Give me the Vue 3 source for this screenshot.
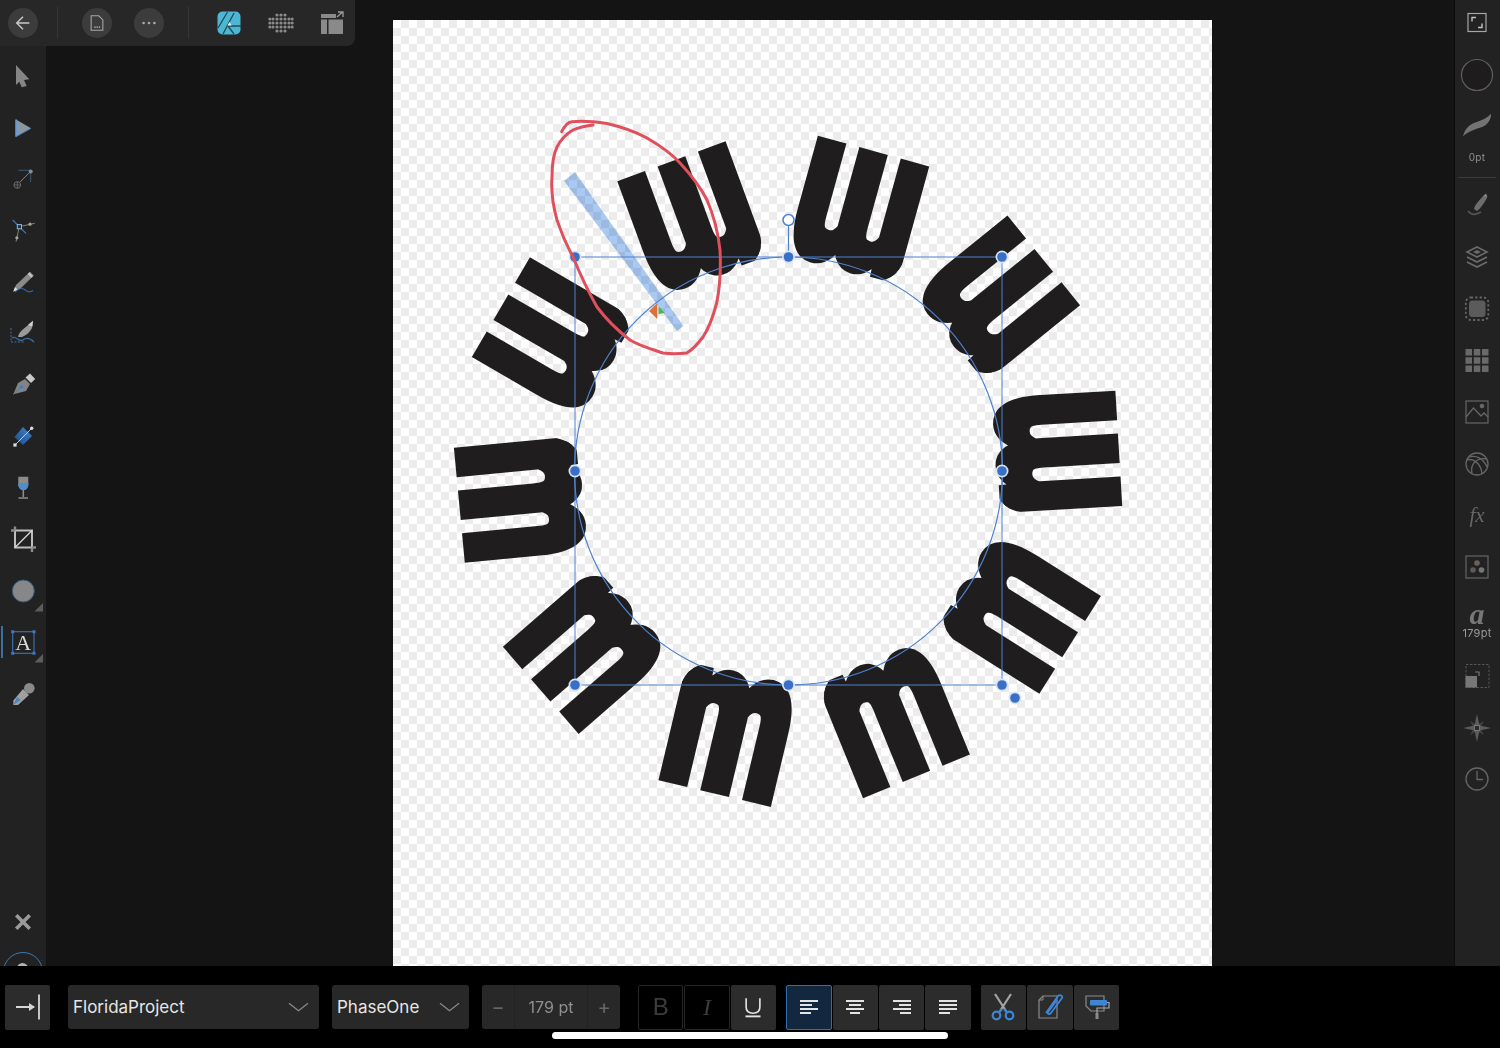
<script setup>
const cx = 788.5;
const cy = 471;
// the text on the circle: ten letters, starting at the top left, feet pointing outward
const letters = Array.from({ length: 10 }, (_, i) => {
  const angle = -20.2 + i * 35.6;
  const rad = (angle * Math.PI) / 180;
  const r = 269;
  const x = cx + r * Math.sin(rad);
  const y = cy - r * Math.cos(rad);
  return { id: i, transform: `translate(${x} ${y}) rotate(${angle - 180}) scale(0.668 1)` };
});
const handles = [
  [575, 257], [788.5, 257], [1002, 257],
  [575, 471], [1002, 471],
  [575, 685], [788.5, 685], [1002, 685],
  [1015, 698],
];
const alignRows = {
  left: [[0, 18], [0, 12], [0, 18], [0, 11]],
  center: [[0, 18], [3, 12], [0, 18], [4, 10]],
  right: [[0, 18], [6, 12], [0, 18], [7, 11]],
  justify: [[0, 18], [0, 18], [0, 18], [0, 11]],
};
</script>

<template>
  <div class="screen">
    <div class="workspace">
      <aside class="tools">
        <div class="tool">
          <svg viewBox="0 0 30 30"><path d="M8 4 21.3 18.3 16 19 18.7 25 13.7 26.3 11.3 20.7 8 24Z" fill="#858585" /></svg>
        </div>
        <div class="tool">
          <svg viewBox="0 0 30 30">
            <path d="M8 7.5 23 16.3 8 24.7Z" fill="#8b96a3" />
            <path d="M8 7.5V24.7" stroke="#5c9ae0" stroke-width="1.6" />
            <path d="M8 24.7 23 16.3" stroke="#4a7eb8" stroke-width="1" />
          </svg>
        </div>
        <div class="tool">
          <svg viewBox="0 0 30 30">
            <path d="M10.5 6.3H22.7V18" fill="none" stroke="#37587c" stroke-width="1" />
            <path d="M12 18 22.7 7.5" stroke="#999" stroke-width=".8" />
            <circle cx="22.7" cy="7.5" r="2" fill="#8c8c8c" />
            <circle cx="9.3" cy="21" r="3.3" fill="none" stroke="#777" stroke-width=".8" />
            <path d="M5.5 21H13M9.3 17.5V24.5" stroke="#777" stroke-width=".7" />
          </svg>
        </div>
        <div class="tool">
          <svg viewBox="0 0 30 30">
            <path d="M4.7 5 18 18.3" stroke="#3f78b8" stroke-width="1.2" />
            <path d="M11.3 11.7 26.7 8.3M11.3 11.7 8 26.7" stroke="#8d8d80" stroke-width=".9" />
            <rect x="9.3" y="9.6" width="4.2" height="4.2" fill="#1e3247" stroke="#8fb5dc" stroke-width="1" />
            <circle cx="22" cy="9.2" r="1.6" fill="#a5a595" />
            <circle cx="8.9" cy="22.8" r="1.6" fill="#a5a595" />
          </svg>
        </div>
        <div class="tool">
          <svg viewBox="0 0 30 30">
            <path d="M5.3 24.5 8 18 22 4.7 25.8 8.5 12 22Z" fill="#8a8a8a" />
            <path d="M20.5 6.2 24.2 10" stroke="#c2c2c2" stroke-width="2.4" />
            <path d="M5.3 24.5 7 20 10 23Z" fill="#ddd" />
            <path d="M7 25C11 21 14 20 18 23.5 20 25 23 25 25 23.5" fill="none" stroke="#3568a3" stroke-width="1.2" />
          </svg>
        </div>
        <div class="tool">
          <svg viewBox="0 0 30 30">
            <path d="M10 19C11 14 14 12 19 8L25 2.7 24 10C22 14 19 17 14 19Z" fill="#9a9a9a" />
            <path d="M20 7 25 2.7 24.4 8.5Z" fill="#d0d0d0" />
            <path d="M3 10V24M3 24H16" fill="none" stroke="#3a6ea8" stroke-width="1" stroke-dasharray="2 1.5" />
            <path d="M4 20C8 17 11 25 15 22S22 20 26 24" fill="none" stroke="#3a6ea8" stroke-width="1.2" />
          </svg>
        </div>
        <div class="tool">
          <svg viewBox="0 0 30 30">
            <path d="M5.3 24.3 10 13 17 9 22 14 18 21Z" fill="#808488" />
            <path d="M17.5 7.5 22 3.5 27.2 9 23 13Z" fill="#c9c9c9" />
            <circle cx="13.5" cy="17" r="1.8" fill="#3d7fc4" />
            <path d="M5.3 24.3 13 17" stroke="#3d7fc4" stroke-width=".9" />
          </svg>
        </div>
        <div class="tool">
          <svg viewBox="0 0 30 30">
            <defs>
              <linearGradient id="fillBlue" x1="0" y1="1" x2="1" y2="0">
                <stop offset="0" stop-color="#1e4a80" />
                <stop offset="1" stop-color="#3f86d6" />
              </linearGradient>
            </defs>
            <path d="M15 6 24 15 15 24 6.5 16Z" fill="url(#fillBlue)" />
            <path d="M7 24 23.7 7.3" stroke="#ddd" stroke-width=".9" />
            <rect x="5.4" y="22.4" width="3.2" height="3.2" fill="#ddd" />
            <circle cx="23.7" cy="7.3" r="1.7" fill="#ddd" />
          </svg>
        </div>
        <div class="tool">
          <svg viewBox="0 0 30 30">
            <path d="M10.3 3.7H20.3V11C20.3 15 18 17 15.3 17S10.3 15 10.3 11Z" fill="#8c8c8c" />
            <path d="M10.3 10H20.3V11C20.3 15 18 17 15.3 17S10.3 15 10.3 11Z" fill="#4f8cd0" />
            <path d="M15.3 17V24M10.5 25H20" stroke="#8c8c8c" stroke-width="1.6" />
          </svg>
        </div>
        <div class="tool">
          <svg viewBox="0 0 30 30">
            <path d="M7 6.5H24V23.5H7Z" fill="none" stroke="#bdbdbd" stroke-width="2" />
            <path d="M3 6.5H7M7 2.5V6.5M24 23.5H28M24 23.5V28" stroke="#8a8a8a" stroke-width="2.4" />
            <path d="M7 23.5 24 6.5" stroke="#dadada" stroke-width="1.2" />
          </svg>
        </div>
        <div class="tool">
          <svg viewBox="0 0 30 30">
            <circle cx="15.3" cy="15" r="11" fill="#878787" stroke="#36597e" stroke-width="1" />
            <path class="corner" d="M35 27V35.5H26.5Z" />
          </svg>
        </div>
        <div class="tool active">
          <span class="active-mark"></span>
          <svg viewBox="0 0 30 30">
            <rect x="4.7" y="4.7" width="21.3" height="21.6" fill="none" stroke="#3a6fae" stroke-width="1.2" />
            <path d="M3.2 3.2h3v3h-3zM24.5 3.2h3v3h-3zM3.2 24.8h3v3h-3zM24.5 24.8h3v3h-3z" fill="#3f78bc" />
            <text x="15.3" y="23" class="tool-a">A</text>
            <path class="corner" d="M35 27V35.5H26.5Z" />
          </svg>
        </div>
        <div class="tool">
          <svg viewBox="0 0 30 30">
            <circle cx="21.3" cy="9.3" r="5.3" fill="#8a8a8a" />
            <path d="M15 10 21 16 10 26 5.3 26 5.3 21.5Z" fill="#a0a0a0" />
            <path d="M5.3 26 9 18 13 21Z" fill="#4c88c8" />
          </svg>
        </div>
        <div class="tools-end">
          <svg class="close-icon" viewBox="0 0 16 16">
            <path d="M2 2 14 14M14 2 2 14" stroke="#9a9a9a" stroke-width="3.2" />
          </svg>
          <span class="help-ring"></span>
        </div>
      </aside>

      <main class="stage">
        <div class="page">
          <svg class="art" viewBox="393 20 819 946">
            <defs>
              <!-- rounds the shoulders of the letters, the feet stay square -->
              <clipPath id="letterClip">
                <rect x="-83" y="-65" width="175" height="200" rx="46" ry="32" />
              </clipPath>
            </defs>
            <text
              v-for="l in letters"
              :key="l.id"
              class="letter"
              :transform="l.transform"
              clip-path="url(#letterClip)"
              x="4.5"
              y="57.5"
            >m</text>

            <path class="guide-bar" d="M683.5 326 677 331 564 180.7 575 172.3Z" />
            <path d="M649 311 657.3 303V319Z" fill="#dd6f3c" />
            <path d="M658.5 306 664.5 313 658.5 314Z" fill="#4fb35a" />

            <rect x="575" y="257" width="427" height="428" fill="none" stroke="#4e82cf" stroke-width="1" />
            <circle cx="788.5" cy="471" r="214" fill="none" stroke="#4e82cf" stroke-width="1.2" />
            <path d="M788.5 226V257" stroke="#4e82cf" stroke-width="1.2" />
            <circle cx="788.5" cy="220" r="5.5" fill="#fff" stroke="#4e82cf" stroke-width="1.5" />
            <g v-for="h in handles" :key="h.join()">
              <circle :cx="h[0]" :cy="h[1]" r="6.5" fill="#d8e4f6" />
              <circle :cx="h[0]" :cy="h[1]" r="4.8" fill="#3a6fc7" />
            </g>

            <path
              class="scribble"
              d="M561.7 131.7C564 127 568 122 572 121.7 585 120.5 597 122 607 123.5 622 127 636 132 647 138 659 145 671 153 680 163 692 176 701 188 707 200 714 216 718 232 720 250 721 268 720 286 716.7 303 713 317 709 328 703 337 697 345 692 350 686.7 353 678 354 671 354 663 353 651 349 640 346 630 340 617 330 606 319 597 307 588 291 580 274 573 257 566 244 561 232 557 220 553 206 551 191 552 177 552 165 553 155 557 147 561 139 566 134 573 130 579 127 586 126 593 125"
            />
          </svg>
        </div>
      </main>

      <aside class="panels">
        <div class="panel-item first">
          <svg viewBox="0 0 30 30">
            <rect x="6" y="5.5" width="18" height="18" fill="none" stroke="#a6a6a6" stroke-width="1.2" />
            <path d="M10 13.5V9.5H14M20 15.5V19.5H16" fill="none" stroke="#c4c4c4" stroke-width="1.4" />
          </svg>
        </div>
        <div class="panel-item tall">
          <svg viewBox="0 0 34 34"><circle cx="17" cy="17" r="15.5" fill="#1e1c1d" stroke="#5f5f5f" stroke-width="1.2" /></svg>
        </div>
        <div class="panel-item stroke-item">
          <svg viewBox="0 0 32 30">
            <path d="M1 28C3 20 8 15 15 13 22 11 27 8 31 4 31 10 28 15 22 18 14 21 8 22 1 28Z" fill="#737373" />
          </svg>
          <span class="panel-label">0pt</span>
        </div>
        <hr class="panel-rule" />
        <div class="panel-item">
          <svg viewBox="0 0 30 30">
            <path d="M12 18C13 13 17 10 22 4 24 4 25 6 25 7 22 12 19 17 15 20Z" fill="#6d6d6d" />
            <path d="M21.5 5 24 2.5 25.5 6Z" fill="#8c8c8c" />
            <path d="M6 20C9 24 14 24 19 21" fill="none" stroke="#555" stroke-width="1.6" />
          </svg>
        </div>
        <div class="panel-item">
          <svg viewBox="0 0 30 30">
            <path d="M15 4 25 9 15 14 5 9Z" fill="none" stroke="#6b6b6b" stroke-width="1.6" />
            <path d="M11 9 15 7 19 9 15 11Z" fill="#6b6b6b" />
            <path d="M5 14 15 19 25 14M5 19 15 24 25 19" fill="none" stroke="#6b6b6b" stroke-width="1.8" />
          </svg>
        </div>
        <div class="panel-item">
          <svg viewBox="0 0 30 30">
            <rect x="7" y="6.5" width="16.5" height="16.5" rx="3.5" fill="#5b5b5b" />
            <rect x="3.8" y="3.5" width="22.5" height="22.5" rx="5" fill="none" stroke="#666" stroke-width="1.8" stroke-dasharray="2.2 2.2" />
          </svg>
        </div>
        <div class="panel-item">
          <svg viewBox="0 0 30 30" fill="#696969">
            <path d="M3.5 3h6.5v6.5h-6.5zM11.8 3h6.5v6.5h-6.5zM20 3h6.5v6.5h-6.5zM3.5 11.2h6.5v6.5h-6.5zM11.8 11.2h6.5v6.5h-6.5zM20 11.2h6.5v6.5h-6.5zM3.5 19.5h6.5v6.5h-6.5zM11.8 19.5h6.5v6.5h-6.5zM20 19.5h6.5v6.5h-6.5z" />
          </svg>
        </div>
        <div class="panel-item">
          <svg viewBox="0 0 30 30">
            <rect x="4" y="4" width="22" height="22" fill="none" stroke="#666" stroke-width="1.2" />
            <path d="M4 20 11.5 11 19 19 22 16 26 20" fill="none" stroke="#666" stroke-width="1.3" />
            <circle cx="20" cy="9" r="2.3" fill="#666" />
          </svg>
        </div>
        <div class="panel-item">
          <svg viewBox="0 0 30 30" fill="none" stroke="#666" stroke-width="1.3">
            <circle cx="15" cy="15" r="11" />
            <path d="M5 11C11 9 19 14 20 25M10 24C8 16 14 8 25 10M7 8C14 6 21 9 25 18" />
          </svg>
        </div>
        <div class="panel-item">
          <span class="fx">fx</span>
        </div>
        <div class="panel-item">
          <svg viewBox="0 0 30 30">
            <rect x="4" y="4" width="22" height="22" fill="none" stroke="#666" stroke-width="1.2" />
            <circle cx="15" cy="11" r="2.8" fill="#6e6257" />
            <circle cx="11" cy="18" r="2.8" fill="#5a5a5a" />
            <circle cx="19.5" cy="18" r="2.8" fill="#777" />
          </svg>
        </div>
        <div class="panel-item char-item">
          <span class="char-a">a</span>
          <span class="panel-label wide">179pt</span>
        </div>
        <div class="panel-item">
          <svg viewBox="0 0 30 30">
            <rect x="4" y="3.5" width="23" height="23" fill="none" stroke="#555" stroke-width="1" stroke-dasharray="2.5 1.5" />
            <rect x="3.5" y="15" width="11.5" height="11.5" fill="#777" />
            <path d="M13 11H17V15" fill="none" stroke="#777" stroke-width="1.2" />
          </svg>
        </div>
        <div class="panel-item">
          <svg viewBox="0 0 30 30">
            <path d="M8 8 15 12 22 8 18 15 22 22 15 18 8 22 12 15Z" fill="#444" />
            <path d="M15 1 17.5 12.5 29 15 17.5 17.5 15 29 12.5 17.5 1 15 12.5 12.5Z" fill="#5c5c5c" />
            <rect x="12.5" y="12.5" width="5" height="5" fill="#2b2b2b" stroke="#777" />
          </svg>
        </div>
        <div class="panel-item">
          <svg viewBox="0 0 30 30" fill="none" stroke="#666" stroke-width="1.3">
            <circle cx="15" cy="15" r="11" />
            <path d="M15 7V15.5H21" />
          </svg>
        </div>
      </aside>

      <nav class="topbar">
        <button class="round">
          <svg viewBox="0 0 20 20"><path d="M17 10H3M10 3 3 10 10 17" fill="none" stroke="#c8c8c8" stroke-width="1.6" /></svg>
        </button>
        <span class="top-rule"></span>
        <button class="round doc">
          <svg viewBox="0 0 20 20">
            <path d="M3.5 2H12L16.5 6.5V18H3.5Z" fill="none" stroke="#a8a8a8" stroke-width="1.2" />
            <path d="M7 14.5h1.5M9.5 14.5H11M12 14.5h1.5" stroke="#c0c0c0" stroke-width="1.5" />
          </svg>
        </button>
        <button class="round more">
          <svg viewBox="0 0 20 20" fill="#a8a8a8">
            <circle cx="4" cy="10" r="1.5" /><circle cx="10" cy="10" r="1.5" /><circle cx="16" cy="10" r="1.5" />
          </svg>
        </button>
        <span class="top-rule second"></span>
        <svg class="top-icon logo" viewBox="0 0 24 24">
          <rect x="0.5" y="0.5" width="23" height="23" rx="5" fill="#4db6d2" />
          <path d="M1 17 10.5 1M6 23 17 2" stroke="#1f4d5c" stroke-width="1.3" />
          <path d="M11 15H24M11 15 17 23" fill="none" stroke="#1f4d5c" stroke-width="1.3" />
          <path d="M10.5 14.5 12.5 11 14.5 14.5Z" fill="#eaf8fb" />
        </svg>
        <svg class="top-icon grid-dots" viewBox="0 0 24 24" fill="#8a8a8a">
          <g v-for="row in 5" :key="row">
            <circle
              v-for="col in 5"
              :key="col"
              v-show="!((row === 1 || row === 5) && (col === 1 || col === 5))"
              :cx="col * 4"
              :cy="row * 4"
              r="1.6"
            />
          </g>
          <circle cx="0.8" cy="8" r="1.5" /><circle cx="0.8" cy="12" r="1.5" /><circle cx="0.8" cy="16" r="1.5" />
          <circle cx="23.2" cy="8" r="1.5" /><circle cx="23.2" cy="12" r="1.5" /><circle cx="23.2" cy="16" r="1.5" />
        </svg>
        <svg class="top-icon export" viewBox="0 0 24 24" fill="#8a8a8a">
          <path d="M1 3H16V7H1ZM1 8.5H7V23H1ZM8.5 8.5H23V23H8.5Z" />
          <path d="M17 6 22.5 1M18 1H23V6" fill="none" stroke="#9c9c9c" stroke-width="1.3" />
        </svg>
      </nav>
    </div>

    <footer class="context">
      <button class="key tab-btn">
        <svg viewBox="0 0 30 30">
          <path d="M3 15H21" stroke="#d6d6d6" stroke-width="2" />
          <path d="M16 11 22 15 16 19Z" fill="#d6d6d6" />
          <path d="M26 2.5V27.5" stroke="#d6d6d6" stroke-width="1.8" />
        </svg>
      </button>
      <button class="combo font-name">
        <span>FloridaProject</span>
        <svg viewBox="0 0 22 10"><path d="M1 1 11 9 21 1" fill="none" stroke="#8c8c8c" stroke-width="1.2" /></svg>
      </button>
      <button class="combo font-style">
        <span>PhaseOne</span>
        <svg viewBox="0 0 22 10"><path d="M1 1 11 9 21 1" fill="none" stroke="#8c8c8c" stroke-width="1.2" /></svg>
      </button>
      <div class="stepper">
        <span class="step">−</span>
        <span class="step-value">179 pt</span>
        <span class="step">+</span>
      </div>
      <div class="key-row weights">
        <button class="key ghost"><span class="b">B</span></button>
        <button class="key ghost"><span class="i">I</span></button>
        <button class="key">
          <svg viewBox="0 0 24 24">
            <path d="M6.5 5V12C6.5 15.5 9 17 12 17S17.5 15.5 17.5 12V5" fill="none" stroke="#e4e4e4" stroke-width="1.3" />
            <path d="M6 19.5H18" stroke="#e4e4e4" stroke-width="1.5" />
          </svg>
        </button>
      </div>
      <div class="key-row aligns">
        <button
          v-for="(rows, name) in alignRows"
          :key="name"
          class="key"
          :class="{ selected: name === 'left' }"
        >
          <svg class="align-icon" viewBox="0 0 18 14" fill="#e4e4e4">
            <rect
              v-for="(r, i) in rows"
              :key="i"
              :x="r[0]"
              :y="i * 4"
              :width="r[1]"
              height="2"
            />
          </svg>
        </button>
      </div>
      <div class="key-row actions">
        <button class="key">
          <svg viewBox="0 0 30 30">
            <path d="M7 2 18 19M23 2 12 19" stroke="#a3a3a3" stroke-width="2.2" />
            <circle cx="8.5" cy="23.5" r="3.8" fill="none" stroke="#3d86d6" stroke-width="2.2" />
            <circle cx="21.5" cy="23.5" r="3.8" fill="none" stroke="#3d86d6" stroke-width="2.2" />
            <path d="M11 20.5 14 17M19 20.5 16 17" stroke="#3d86d6" stroke-width="2.2" />
          </svg>
        </button>
        <button class="key">
          <svg viewBox="0 0 30 30">
            <path d="M8 4H22V26H4V8Z" fill="none" stroke="#8a8a8a" stroke-width="1.2" />
            <path d="M4 8H8V4" fill="none" stroke="#8a8a8a" stroke-width="1" />
            <path d="M11 21 23 4C25 2 28 4 27 6L16 21C14 23 12 22 13 20L22 8" fill="none" stroke="#3d86d6" stroke-width="1.8" />
          </svg>
        </button>
        <button class="key">
          <svg viewBox="0 0 30 30">
            <path d="M5 4H23V19H10L5 14Z" fill="none" stroke="#8a8a8a" stroke-width="1.2" />
            <rect x="9" y="8" width="17" height="5.5" rx="1" fill="#3d86d6" />
            <path d="M26 10.5H28V16H16V22" fill="none" stroke="#aaa" stroke-width="1.2" />
            <rect x="14.5" y="21" width="3" height="6" fill="#8a8a8a" />
          </svg>
        </button>
      </div>
      <span class="home-bar"></span>
    </footer>
  </div>
</template>

<style scoped>
.screen {
  width: 1500px;
  height: 1048px;
  display: flex;
  flex-direction: column;
  background: #000;
  font-family: Inter, "Liberation Sans", sans-serif;
  overflow: hidden;
}
button {
  border: 0;
  padding: 0;
  font-family: inherit;
}
svg {
  display: block;
  overflow: visible;
}

/* work area */
.workspace {
  position: relative;
  height: 966px;
  display: flex;
  background: #141414;
}
.tools {
  width: 46px;
  flex: none;
  padding-top: 50px;
  box-sizing: border-box;
  background: #222;
  display: flex;
  flex-direction: column;
  overflow: hidden;
}
.tool {
  position: relative;
  height: 51.5px;
  flex: none;
  display: flex;
  align-items: center;
  padding-left: 8px;
}
.tool svg {
  width: 30px;
  height: 30px;
}
.corner {
  fill: #5c5c5c;
}
.active-mark {
  position: absolute;
  left: 1px;
  top: 9px;
  width: 2px;
  height: 32px;
  background: #3a6ea8;
}
.tool-a {
  font-family: "Liberation Serif", serif;
  font-size: 22px;
  fill: #d9d9d9;
  text-anchor: middle;
}
.tools-end {
  margin-top: 193px;
  display: flex;
  flex-direction: column;
  align-items: center;
}
.close-icon {
  width: 18px;
  height: 18px;
}
.help-ring {
  position: relative;
  margin-top: 21px;
  width: 40px;
  height: 40px;
  flex: none;
  box-sizing: border-box;
  border: 1.5px solid #3a7ab5;
  border-radius: 50%;
}
.help-ring::after {
  content: "";
  position: absolute;
  left: 13px;
  top: 10px;
  width: 11px;
  height: 11px;
  border-radius: 50%;
  background: #b5b5b5;
}

.stage {
  flex: 1;
  padding: 20px 0 0 347px;
  min-width: 0;
}
.page {
  width: 819px;
  height: 946px;
  background-color: #fff;
  background-image: repeating-conic-gradient(#ececec 0 25%, #fff 0 50%);
  background-size: 16px 16px;
}
.art {
  width: 819px;
  height: 946px;
  overflow: hidden;
}
.letter {
  font-family: Roboto, sans-serif;
  font-weight: 900;
  font-size: 214px;
  text-anchor: middle;
  fill: #1f1d1e;
  stroke: #1f1d1e;
  stroke-width: 9px;
  stroke-linejoin: miter;
}
.guide-bar {
  fill: #a9c8f2;
  mix-blend-mode: multiply;
}
.scribble {
  fill: none;
  stroke: #e0505c;
  stroke-width: 3;
  stroke-linecap: round;
}

/* right studio column */
.panels {
  width: 46px;
  flex: none;
  box-sizing: border-box;
  border-left: 1px solid #0b0b0b;
  background: #222;
  display: flex;
  flex-direction: column;
  align-items: center;
  padding-right: 1px;
}
.panel-item {
  height: 51.5px;
  flex: none;
  display: flex;
  flex-direction: column;
  align-items: center;
  justify-content: center;
}
.panel-item svg {
  width: 30px;
  height: 30px;
}
.panel-item.first {
  height: 46px;
}
.panel-item.tall {
  height: 58px;
}
.panel-item.tall svg {
  width: 34px;
  height: 34px;
}
.stroke-item {
  height: 59px;
  justify-content: flex-start;
  padding-top: 5px;
  box-sizing: border-box;
}
.panel-label {
  font-size: 10px;
  line-height: 12px;
  color: #8f8f8f;
  letter-spacing: 0.3px;
}
.stroke-item .panel-label {
  margin-top: 12px;
}
.panel-label.wide {
  font-size: 11px;
  color: #9a9a9a;
}
.panel-rule {
  width: 38px;
  height: 1px;
  margin: 14px 0 2.25px;
  border: 0;
  background: #3b3b3b;
  flex: none;
}
.fx {
  font-family: "Liberation Serif", serif;
  font-style: italic;
  font-size: 21px;
  color: #666;
}
.char-item {
  height: 58px;
  justify-content: flex-start;
  padding-top: 9.75px;
  box-sizing: border-box;
}
.char-a {
  font-family: "Liberation Serif", serif;
  font-style: italic;
  font-weight: 700;
  font-size: 30px;
  line-height: 24px;
  height: 24px;
  margin-bottom: 1px;
  color: #777;
}

/* floating top toolbar */
.topbar {
  position: absolute;
  left: 0;
  top: 0;
  width: 355px;
  height: 46px;
  background: #272727;
  border-bottom-right-radius: 8px;
  display: flex;
  align-items: center;
  padding-left: 8px;
  box-sizing: border-box;
}
.round {
  width: 30px;
  height: 30px;
  flex: none;
  border-radius: 50%;
  background: #3c3c3c;
  display: flex;
  align-items: center;
  justify-content: center;
}
.round svg {
  width: 18px;
  height: 18px;
}
.top-rule {
  width: 1px;
  height: 32px;
  flex: none;
  margin: 0 24px 0 19px;
  background: #363636;
}
.more {
  margin-left: 22px;
}
.top-rule.second {
  margin: 0 28px 0 24px;
}
.top-icon {
  width: 24px;
  height: 24px;
  flex: none;
}
.grid-dots {
  margin-left: 28px;
}
.export {
  margin-left: 27px;
}

/* context toolbar */
.context {
  position: relative;
  flex: 1;
  display: flex;
  align-items: center;
  padding-left: 5px;
  background: #000;
}
.key {
  width: 45.4px;
  height: 45px;
  flex: none;
  background: #2c2c2c;
  border-radius: 2px;
  display: flex;
  align-items: center;
  justify-content: center;
}
.key svg {
  width: 30px;
  height: 30px;
}
.key .align-icon {
  width: 18px;
  height: 14px;
}
.tab-btn {
  width: 45px;
  margin-right: 18px;
}
.combo {
  height: 44px;
  flex: none;
  background: #282828;
  border-radius: 3px;
  color: #e6e6e6;
  font-size: 17px;
  display: flex;
  align-items: center;
  justify-content: space-between;
  box-sizing: border-box;
}
.combo svg {
  width: 21px;
  height: 10px;
}
.font-name {
  width: 251px;
  margin-right: 13px;
  padding: 0 10px 0 5px;
}
.font-style {
  width: 137px;
  margin-right: 13px;
  padding: 0 9px 0 5px;
}
.stepper {
  width: 138px;
  height: 44px;
  flex: none;
  display: flex;
  background: #282828;
  border-radius: 3px;
  color: #8f8f8f;
  font-size: 16px;
  margin-right: 18px;
}
.step {
  width: 32px;
  display: flex;
  align-items: center;
  justify-content: center;
  color: #666;
  font-size: 20px;
}
.step-value {
  flex: 1;
  display: flex;
  align-items: center;
  justify-content: center;
  border-left: 1px solid #222;
  border-right: 1px solid #222;
}
.key-row {
  display: flex;
  gap: 1px;
  flex: none;
}
.weights,
.aligns {
  margin-right: 10px;
}
.ghost {
  background: #000;
  border: 1px solid #252525;
  box-sizing: border-box;
  font-size: 24px;
  color: #3c3c3c;
}
.b {
  font-family: "Liberation Sans", sans-serif;
}
.i {
  font-family: "Liberation Serif", serif;
  font-style: italic;
}
.selected {
  background: #13283f;
  border: 1.5px solid #2f6fb5;
  box-sizing: border-box;
}
.home-bar {
  position: absolute;
  left: 552px;
  top: 66px;
  width: 396px;
  height: 7px;
  background: #fff;
  border-radius: 4px;
}
</style>

<style>
html,
body {
  background: #000;
}
</style>
